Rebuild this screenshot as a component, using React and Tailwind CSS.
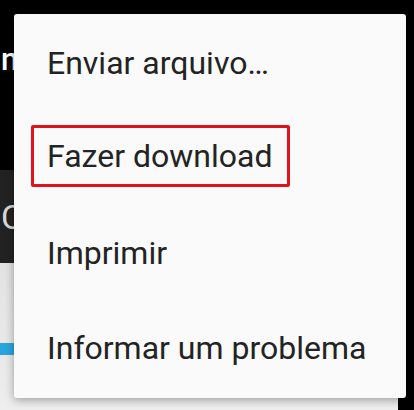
import { useState } from "react";

const items = ["Enviar arquivo…", "Fazer download", "Imprimir", "Informar um problema"];

export default function App() {
  const [selected] = useState(1);

  return (
    <div
      className="relative w-[414px] h-[410px] overflow-hidden bg-black"
      style={{ fontFamily: "Roboto, 'Noto Sans', sans-serif" }}
    >
      {/* Page behind the overflow menu */}
      <div className="flex flex-col w-[398px] h-full">
        <div className="h-[170px] bg-black pt-[44px] pl-[1px]">
          <span className="block w-[13px] overflow-hidden text-[31px] leading-none font-medium text-white">n</span>
        </div>
        <div className="h-[93px] bg-[#222222] flex items-center">
          <span className="block w-[14px] overflow-hidden text-[34px] leading-none text-[#d8d8d8] pl-[1px]">C</span>
        </div>
        <div className="flex-1 bg-gradient-to-b from-[#e2e2e2] to-[#eeeeee] pt-[80px]">
          <div className="h-[12px] w-full bg-[#2aa6df]" />
        </div>
      </div>

      {/* Overflow menu */}
      <div className="absolute left-[14px] top-[14px] w-[392px] h-[384px] bg-[#fafafa] rounded-[3px] shadow-[0_2px_10px_rgba(0,0,0,0.35)] py-[3px]">
        {items.map((label, i) => (
          <div key={label} className="h-[95px] flex items-center pl-[17px]">
            <div
              className={`flex items-center h-[62px] pl-[13px] pr-[15px] rounded-[2px] border-[3px] ${
                i === selected ? "border-[#e0141b] -translate-y-[4px]" : "border-transparent -translate-y-[2px]"
              }`}
            >
              <span className="text-[32px] leading-none text-[#232323]">{label}</span>
            </div>
          </div>
        ))}
      </div>
    </div>
  );
}
